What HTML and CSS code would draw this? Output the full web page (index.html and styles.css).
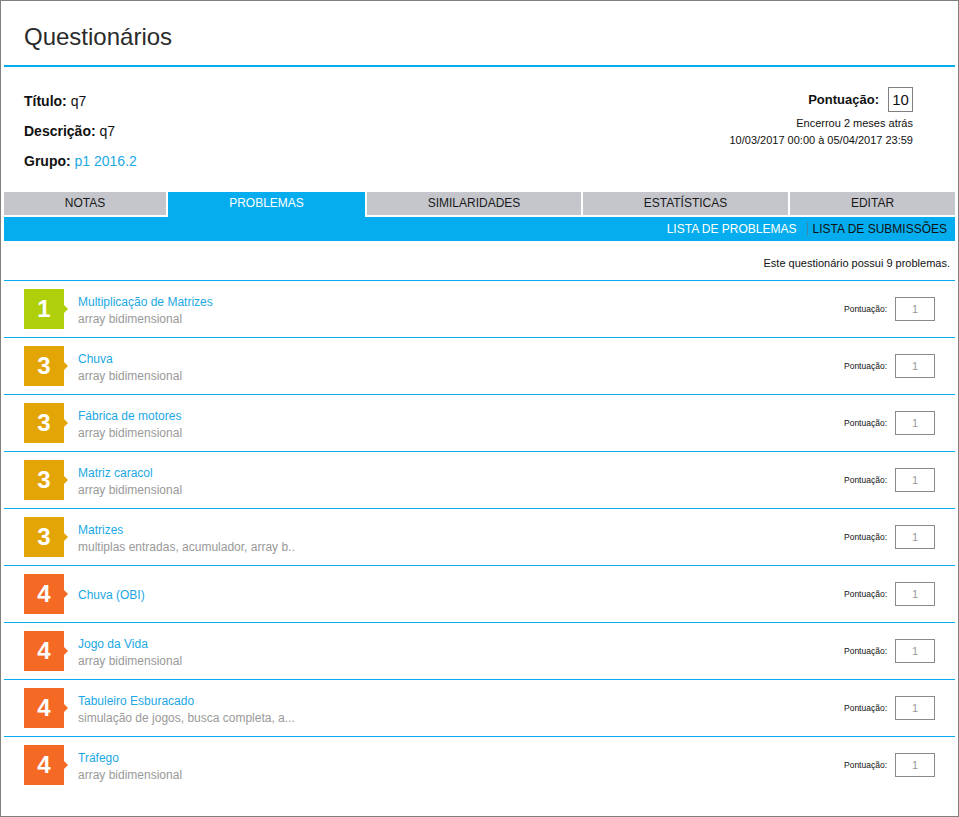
FILE: index.html
```html
<!DOCTYPE html>
<html lang="pt">
<head>
<meta charset="utf-8">
<title>Questionários</title>
<link rel="stylesheet" href="styles.css">
</head>
<body>
<div class="frame">
  <header class="header">
    <h1 class="title">Questionários</h1>
  </header>

  <section class="info">
    <div class="info-left">
      <div class="info-line"><b>Título:</b> q7</div>
      <div class="info-line"><b>Descrição:</b> q7</div>
      <div class="info-line"><b>Grupo:</b> <a class="link" href="#">p1 2016.2</a></div>
    </div>
    <div class="info-right">
      <div class="score-row">
        <span class="score-label">Pontuação:</span>
        <span class="score-box">10</span>
      </div>
      <div class="dates">
        <div>Encerrou 2 meses atrás</div>
        <div>10/03/2017 00:00 à 05/04/2017 23:59</div>
      </div>
    </div>
  </section>

  <nav class="tabs">
    <div class="tab">NOTAS</div>
    <div class="tab active">PROBLEMAS</div>
    <div class="tab">SIMILARIDADES</div>
    <div class="tab">ESTATÍSTICAS</div>
    <div class="tab">EDITAR</div>
  </nav>
  <div class="subbar">
    <span class="sublink current">LISTA DE PROBLEMAS</span>
    <span class="sublink other">LISTA DE SUBMISSÕES</span>
  </div>

  <div class="summary">Este questionário possui 9 problemas.</div>

  <ul class="problems">
    <li class="problem">
      <div class="badge green">1</div>
      <div class="ptext"><a class="pname" href="#">Multiplicação de Matrizes</a><span class="ptags">array bidimensional</span></div>
      <div class="pscore"><span class="pscore-label">Pontuação:</span><span class="pscore-box">1</span></div>
    </li>
    <li class="problem">
      <div class="badge gold">3</div>
      <div class="ptext"><a class="pname" href="#">Chuva</a><span class="ptags">array bidimensional</span></div>
      <div class="pscore"><span class="pscore-label">Pontuação:</span><span class="pscore-box">1</span></div>
    </li>
    <li class="problem">
      <div class="badge gold">3</div>
      <div class="ptext"><a class="pname" href="#">Fábrica de motores</a><span class="ptags">array bidimensional</span></div>
      <div class="pscore"><span class="pscore-label">Pontuação:</span><span class="pscore-box">1</span></div>
    </li>
    <li class="problem">
      <div class="badge gold">3</div>
      <div class="ptext"><a class="pname" href="#">Matriz caracol</a><span class="ptags">array bidimensional</span></div>
      <div class="pscore"><span class="pscore-label">Pontuação:</span><span class="pscore-box">1</span></div>
    </li>
    <li class="problem">
      <div class="badge gold">3</div>
      <div class="ptext"><a class="pname" href="#">Matrizes</a><span class="ptags">multiplas entradas, acumulador, array b..</span></div>
      <div class="pscore"><span class="pscore-label">Pontuação:</span><span class="pscore-box">1</span></div>
    </li>
    <li class="problem">
      <div class="badge orange">4</div>
      <div class="ptext"><a class="pname" href="#">Chuva (OBI)</a></div>
      <div class="pscore"><span class="pscore-label">Pontuação:</span><span class="pscore-box">1</span></div>
    </li>
    <li class="problem">
      <div class="badge orange">4</div>
      <div class="ptext"><a class="pname" href="#">Jogo da Vida</a><span class="ptags">array bidimensional</span></div>
      <div class="pscore"><span class="pscore-label">Pontuação:</span><span class="pscore-box">1</span></div>
    </li>
    <li class="problem">
      <div class="badge orange">4</div>
      <div class="ptext"><a class="pname" href="#">Tabuleiro Esburacado</a><span class="ptags">simulação de jogos, busca completa, a...</span></div>
      <div class="pscore"><span class="pscore-label">Pontuação:</span><span class="pscore-box">1</span></div>
    </li>
    <li class="problem">
      <div class="badge orange">4</div>
      <div class="ptext"><a class="pname" href="#">Tráfego</a><span class="ptags">array bidimensional</span></div>
      <div class="pscore"><span class="pscore-label">Pontuação:</span><span class="pscore-box">1</span></div>
    </li>
  </ul>
</div>
</body>
</html>
```

FILE: styles.css
```css
* { box-sizing: border-box; }

html, body {
  margin: 0;
  padding: 0;
  background: #fff;
}

body {
  font-family: "Liberation Sans", Arial, sans-serif;
  color: #111;
}

.frame {
  width: 959px;
  height: 817px;
  border: 1px solid #808080;
  padding: 0 3px;
  overflow: hidden;
}

.header {
  padding: 22px 20px 14px 20px;
  border-bottom: 2px solid #05adee;
}

.title {
  margin: 0;
  font-size: 24px;
  line-height: 28px;
  font-weight: normal;
  color: #2b2b2b;
}

.info {
  display: flex;
  justify-content: space-between;
  align-items: flex-start;
  padding: 19px 42px 16px 20px;
}

.info-line {
  font-size: 14px;
  line-height: 30px;
  color: #111;
}

.info-line b { font-weight: bold; }

.link {
  color: #1ba8e4;
  text-decoration: none;
}

.info-right {
  margin-top: 1px;
  display: flex;
  flex-direction: column;
  align-items: flex-end;
}

.score-row {
  display: flex;
  align-items: center;
  gap: 9px;
}

.score-label {
  font-size: 13px;
  font-weight: bold;
}

.score-box {
  width: 25px;
  height: 25px;
  border: 1px solid #808080;
  font-size: 15px;
  line-height: 23px;
  text-align: center;
}

.dates {
  margin-top: 3px;
  font-size: 11px;
  line-height: 17px;
  text-align: right;
}

.tabs {
  display: grid;
  grid-template-columns: 162px 197px 214px 205px 165px;
  column-gap: 2px;
  height: 25px;
  align-items: start;
}

.tab {
  height: 23px;
  background: #c4c6cc;
  font-size: 12px;
  line-height: 23px;
  text-align: center;
  color: #1a1a1a;
}

.tab.active {
  height: 25px;
  background: #05adee;
  color: #fff;
}

.subbar {
  height: 24px;
  background: #05adee;
  display: flex;
  justify-content: flex-end;
  align-items: center;
  padding-right: 8px;
  font-size: 12px;
}

.sublink {
  line-height: 24px;
}

.sublink.current {
  color: #fff;
  padding-right: 10px;
}

.sublink.other {
  color: #111;
  border-left: 1px solid #3f87a8;
  padding-left: 5px;
  line-height: 14px;
}

.summary {
  padding: 14px 5px 8px 0;
  font-size: 11px;
  line-height: 17px;
  text-align: right;
}

.problems {
  list-style: none;
  margin: 0;
  padding: 0;
}

.problem {
  display: flex;
  align-items: center;
  border-top: 1px solid #05adee;
  padding: 8px 20px;
}

.badge {
  position: relative;
  width: 40px;
  height: 40px;
  flex: none;
  color: #fff;
  font-size: 24px;
  font-weight: bold;
  line-height: 40px;
  text-align: center;
}

.badge::after {
  content: "";
  position: absolute;
  left: 40px;
  top: 16px;
  border-top: 4px solid transparent;
  border-bottom: 4px solid transparent;
  border-left: 4px solid currentColor;
}

.badge.green { background: #afcf0b; }
.badge.green::after { border-left-color: #afcf0b; }
.badge.gold { background: #e3a506; }
.badge.gold::after { border-left-color: #e3a506; }
.badge.orange { background: #f46a25; }
.badge.orange::after { border-left-color: #f46a25; }

.ptext {
  flex: 1;
  display: flex;
  flex-direction: column;
  margin-left: 14px;
  padding-top: 3px;
  font-size: 12px;
  line-height: 17px;
}

.pname {
  color: #1ba8e4;
  text-decoration: none;
}

.ptags {
  color: #999;
}

.pscore {
  display: flex;
  align-items: center;
  gap: 8px;
}

.pscore-label {
  font-size: 8.5px;
  color: #111;
}

.pscore-box {
  width: 40px;
  height: 24px;
  border: 1px solid #8a8a8a;
  font-size: 11px;
  line-height: 22px;
  text-align: center;
  color: #999;
}
```
